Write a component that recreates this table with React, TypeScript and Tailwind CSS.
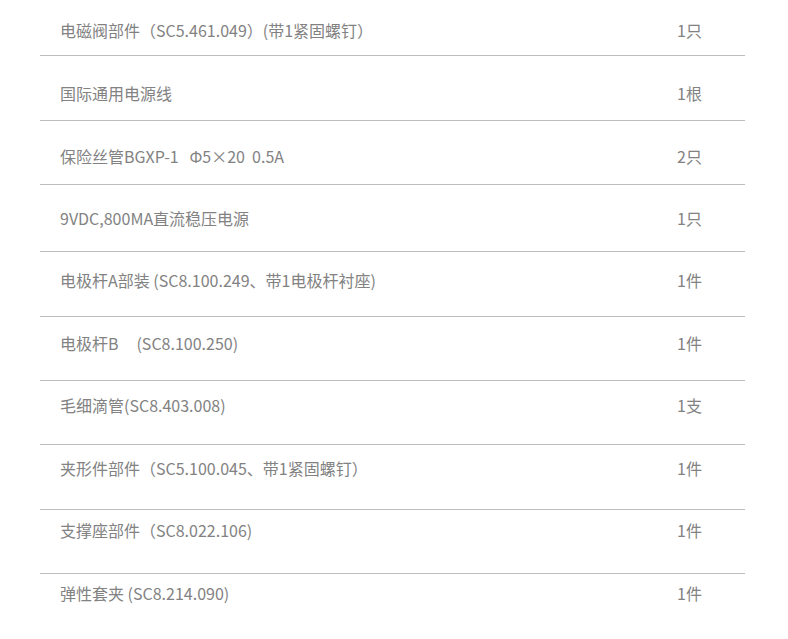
const rows = [
  { name: "电磁阀部件（SC5.461.049）(带1紧固螺钉）", qty: "1只", row: "h-[56px] border-b", pad: "pt-[18px]" },
  { name: "国际通用电源线", qty: "1根", row: "h-[65px] border-b", pad: "pt-[25px]" },
  { name: "保险丝管BGXP-1\u00a0\u00a0\u00a0Φ5×20\u00a0\u00a00.5A", qty: "2只", row: "h-[64px] border-b", pad: "pt-[23px]" },
  { name: "9VDC,800MA直流稳压电源", qty: "1只", row: "h-[67px] border-b", pad: "pt-[21px]" },
  { name: "电极杆A部装 (SC8.100.249、带1电极杆衬座)", qty: "1件", row: "h-[65px] border-b", pad: "pt-[16px]" },
  { name: "电极杆B\u00a0\u00a0\u00a0\u00a0\u00a0(SC8.100.250)", qty: "1件", row: "h-[64px] border-b", pad: "pt-[14px]" },
  { name: "毛细滴管(SC8.403.008)", qty: "1支", row: "h-[64px] border-b", pad: "pt-[12px]" },
  { name: "夹形件部件（SC5.100.045、带1紧固螺钉）", qty: "1件", row: "h-[65px] border-b", pad: "pt-[11px]" },
  { name: "支撑座部件（SC8.022.106)", qty: "1件", row: "h-[64px] border-b", pad: "pt-[8px]" },
  { name: "弹性套夹 (SC8.214.090)", qty: "1件", row: "h-[65px]", pad: "pt-[7px]" },
];

export default function App() {
  return (
    <div className="min-h-[639px] w-[788px] bg-white font-['Noto_Sans_CJK_SC','Noto_Sans',sans-serif] text-[16px] leading-6 text-[#828282]">
      <div className="ml-10 w-[705px]">
        {rows.map((r) => (
          <div key={r.name} className={`${r.row} border-[#bdbdbd]`}>
            <div className={`${r.pad} grid grid-cols-[637px_1fr]`}>
              <span className="pl-5 whitespace-nowrap">{r.name}</span>
              <span className="whitespace-nowrap">{r.qty}</span>
            </div>
          </div>
        ))}
      </div>
    </div>
  );
}
